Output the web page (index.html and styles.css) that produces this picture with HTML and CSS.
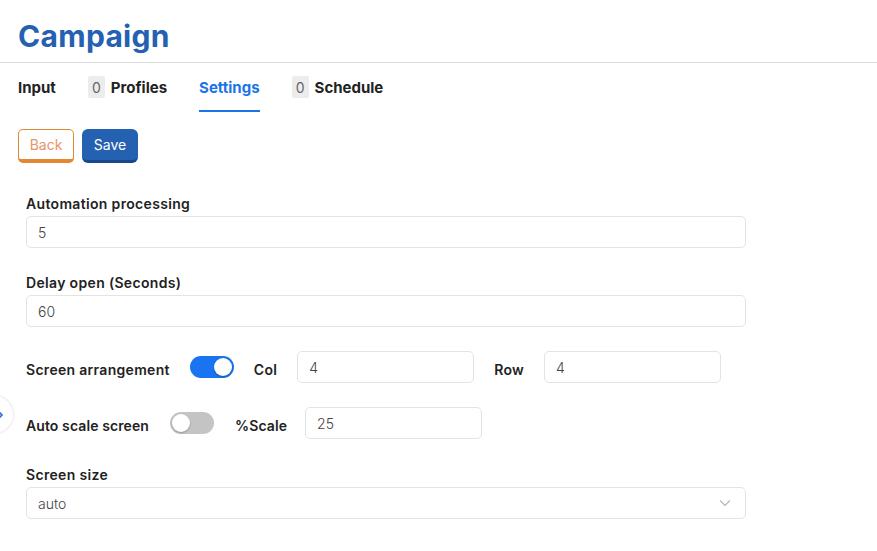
FILE: index.html
```html
<!DOCTYPE html>
<html lang="en">
<head>
    <meta charset="UTF-8" />
    <meta name="viewport" content="width=device-width, initial-scale=1.0" />
    <title>Campaign - Settings</title>
    <link rel="stylesheet" href="styles.css">
</head>
<body>
    <div class="side-toggle">
        <svg width="12" height="12" viewBox="0 0 12 12"><path d="M3 1l5 5-5 5" fill="none" stroke="#2a6fd6" stroke-width="1.6"/></svg>
    </div>

    <div class="page-header">
        <h1>Campaign</h1>
    </div>

    <div class="tabs">
        <div class="tab">Input</div>
        <div class="tab"><span class="badge">0</span>Profiles</div>
        <div class="tab active">Settings</div>
        <div class="tab"><span class="badge">0</span>Schedule</div>
    </div>

    <div class="actions">
        <button class="btn btn-back">Back</button>
        <button class="btn btn-save">Save</button>
    </div>

    <div class="settings-form">
        <div class="field">
            <label for="processing">Automation processing</label>
            <input type="text" id="processing" value="5" />
        </div>

        <div class="field">
            <label for="delay">Delay open (Seconds)</label>
            <input type="text" id="delay" value="60" />
        </div>

        <div class="inline-row">
            <span class="inline-label">Screen arrangement</span>
            <span class="switch on"><span class="knob"></span></span>
            <span class="inline-label">Col</span>
            <input type="text" class="small-input" value="4" />
            <span class="inline-label">Row</span>
            <input type="text" class="small-input" value="4" />
        </div>

        <div class="inline-row tight">
            <span class="inline-label">Auto scale screen</span>
            <span class="switch"><span class="knob"></span></span>
            <span class="inline-label">%Scale</span>
            <input type="text" class="small-input" value="25" />
        </div>

        <div class="field last">
            <label for="size">Screen size</label>
            <div class="select">
                <span>auto</span>
                <svg width="12" height="8" viewBox="0 0 12 8"><path d="M1 1.5l5 5 5-5" fill="none" stroke="#b5b5b5" stroke-width="1.1"/></svg>
            </div>
        </div>
    </div>
</body>
</html>
```

FILE: styles.css
```css
* {
    margin: 0;
    padding: 0;
    box-sizing: border-box;
}

body {
    font-family: Inter, "Noto Sans", sans-serif;
    background: #ffffff;
    color: #222222;
    position: relative;
    overflow: hidden;
    height: 100vh;
}

.side-toggle {
    position: absolute;
    left: -24px;
    top: 396px;
    width: 37px;
    height: 37px;
    border-radius: 50%;
    background: #ffffff;
    box-shadow: 0 0 3px rgba(0, 0, 0, 0.18);
    display: flex;
    align-items: center;
    justify-content: flex-end;
    padding-right: 7px;
}

.page-header {
    height: 63px;
    padding: 16px 18px 0;
    border-bottom: 1px solid #dcdcdc;
}

.page-header h1 {
    font-size: 30px;
    line-height: 40px;
    font-weight: 700;
    color: #2461b0;
    letter-spacing: 0.3px;
}

.tabs {
    display: flex;
    gap: 32px;
    padding: 0 18px;
}

.tab {
    display: flex;
    align-items: center;
    gap: 6px;
    padding: 13px 0 12px;
    height: 49px;
    font-size: 15px;
    font-weight: 700;
    color: #222222;
    border-bottom: 2px solid transparent;
}

.tab.active {
    color: #1a73e8;
    border-bottom-color: #1a73e8;
}

.badge {
    display: inline-flex;
    align-items: center;
    justify-content: center;
    width: 17px;
    height: 22px;
    background: #ececec;
    border-radius: 2px;
    font-weight: 400;
    font-size: 14px;
    color: #666666;
}

.actions {
    display: flex;
    gap: 8px;
    padding: 17px 18px 0;
}

.btn {
    height: 34px;
    width: 56px;
    border-radius: 5px;
    font-family: inherit;
    font-size: 14px;
    cursor: pointer;
}

.btn-back {
    background: #ffffff;
    color: #e8946a;
    border: 1px solid #e38733;
    border-bottom-width: 4px;
}

.btn-save {
    background: #2461b0;
    color: #ffffff;
    border: none;
    border-bottom: 3px solid #18488a;
    border-radius: 6px;
}

.settings-form {
    width: 746px;
    padding: 31px 0 0 26px;
    display: flex;
    flex-direction: column;
    gap: 25px;
}

.field label {
    display: block;
    font-size: 14px;
    font-weight: 600;
    letter-spacing: 0.33px;
    line-height: 20px;
    margin-bottom: 2px;
}

.field.last {
    margin-top: 1px;
}

.field input,
.small-input,
.select {
    width: 100%;
    height: 32px;
    border: 1px solid #e3e3e3;
    border-radius: 5px;
    padding: 0 11px;
    font-family: inherit;
    font-size: 14px;
    font-weight: 300;
    color: #444444;
    background: #ffffff;
    outline: none;
}

.inline-row {
    display: flex;
    align-items: center;
    gap: 20px;
    height: 32px;
    margin-top: -1px;
}

.inline-label {
    font-size: 14px;
    font-weight: 600;
    letter-spacing: 0.3px;
    padding-top: 4px;
}

.inline-row.tight {
    gap: 21px;
}

.inline-row.tight .inline-label {
    letter-spacing: 0.1px;
}

.inline-row.tight .inline-label + .small-input {
    margin-left: -3px;
}

.small-input {
    width: 177px;
}

.switch {
    width: 44px;
    height: 22px;
    border-radius: 11px;
    background: #c4c4c4;
    display: flex;
    align-items: center;
    padding: 0 2px;
    flex-shrink: 0;
}

.switch .knob {
    width: 18px;
    height: 18px;
    border-radius: 50%;
    background: #ffffff;
    box-shadow: 0 1px 2px rgba(0, 0, 0, 0.25);
}

.switch.on {
    background: #1a73f0;
    justify-content: flex-end;
}

.select {
    display: flex;
    align-items: center;
    justify-content: space-between;
    padding-right: 14px;
}
```
